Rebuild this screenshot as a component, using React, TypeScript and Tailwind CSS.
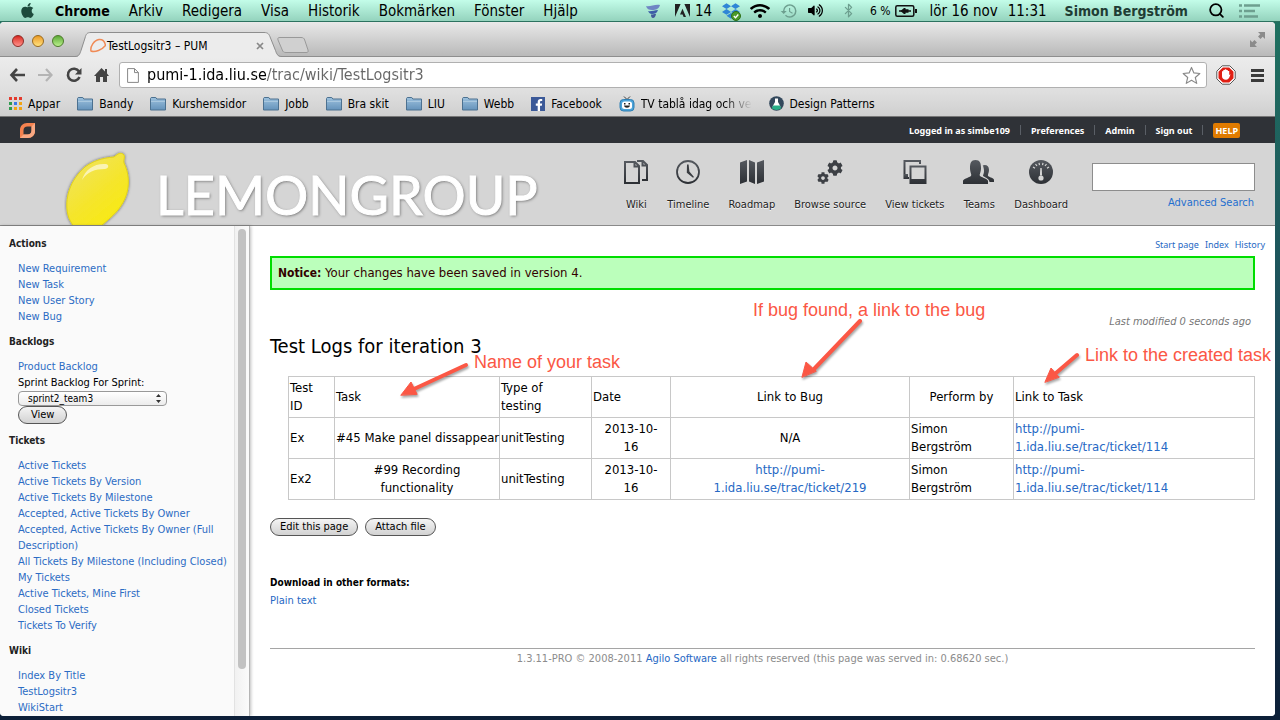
import type { ReactNode } from "react";
import { FaApple, FaDropbox, FaCog, FaWifi, FaVolumeUp, FaFacebookF } from "react-icons/fa";
import { MdHistory } from "react-icons/md";
import { Bluetooth, Search } from "lucide-react";

const ui = "font-['DejaVu_Sans_Condensed','DejaVu_Sans',sans-serif]";
const link = "text-[#2668c4] hover:underline";

function MenuBar() {
  return (
    <header className="flex h-[22px] shrink-0 items-center border-b border-[#2c7260] bg-linear-to-b from-[#c3fde9] to-[#94d3bd] text-[15px] leading-5 text-black">
      <nav aria-label="Application menu" className="flex items-center gap-[19px] pl-[19px] whitespace-nowrap">
        <FaApple className="size-[17px] text-[#1d4a3c]" />
        <span className="text-[14px] font-bold">Chrome</span>
        <span>Arkiv</span>
        <span>Redigera</span>
        <span>Visa</span>
        <span>Historik</span>
        <span>Bokmärken</span>
        <span>Fönster</span>
        <span>Hjälp</span>
      </nav>
      <div className="ml-auto flex items-center gap-[10px] pr-5 whitespace-nowrap">
        <svg className="size-4" viewBox="0 0 16 16" aria-hidden="true">
          <path d="M1 3c4 1 9-2 14-1-1 4-4 5-8 5C4 7 2 6 1 3z" fill="#6f86c4" />
          <path d="M3 8c3 1 6-1 10-1-1 3-3 4-6 4-2 0-3-1-4-3z" fill="#3d5da8" />
          <path d="M6 11.500c2 0 3-.5 5-.5-.5 2.500-1.500 4-3 4s-2-1.500-2-3.500z" fill="#42599a" />
        </svg>
        <span className="ml-1 flex items-center gap-[5px]">
          <svg className="h-[13px] w-[15px]" viewBox="0 0 15 13" aria-hidden="true">
            <path d="M0 0h5.600L0 13zM9.400 0H15v13zM7.500 4.800 11 13H8.600l-1-2.600H5z" fill="#222" />
          </svg>
          14
        </span>
        <span className="relative">
          <FaDropbox className="size-[18px] text-[#2f86d6]" />
          <svg className="absolute -right-px -bottom-px size-[10px]" viewBox="0 0 10 10" aria-hidden="true">
            <circle cx="5" cy="5" r="4.500" fill="#4c9a2a" stroke="#2e6f17" />
            <path d="m2.800 5 1.700 1.700 2.800-3.200" fill="none" stroke="#fff" strokeWidth="1.300" />
          </svg>
        </span>
        <FaWifi className="size-5" />
        <MdHistory className="size-[18px] text-[#6d9f8f]" />
        <FaVolumeUp className="size-[15px]" />
        <Bluetooth className="ml-2 size-[15px] text-[#6d9f8f]" strokeWidth={2} />
        <span className="ml-1 flex items-center gap-1 text-[12px]">
          6 %
          <svg className="h-3 w-[22px]" viewBox="0 0 22 12" aria-hidden="true">
            <rect x=".8" y=".8" width="18" height="10.400" rx="1.500" fill="none" stroke="#111" strokeWidth="1.500" />
            <path d="M20 4h2v4h-2z" fill="#111" />
            <path d="M4 6h3M12 6h4" stroke="#111" strokeWidth="1.600" />
            <path d="M5.500 6l3.500-3h1.500v1.200h3v3.600h-3V9H9z" fill="#111" />
          </svg>
        </span>
        <span className="ml-[3px]">lör 16 nov</span>
        <span>11:31</span>
        <span className="ml-2 text-[14px] font-bold text-[#1f3d34]">Simon Bergström</span>
        <Search className="ml-[10px] size-[17px]" strokeWidth={2.5} />
        <svg className="ml-1 h-[14px] w-[21px]" viewBox="0 0 21 14" aria-hidden="true">
          <path d="M0 1.500h3M5 1.500h16M0 7h3M5 7h11M0 12.500h3M5 12.500h14" stroke="#6d9f8f" strokeWidth="2.400" />
        </svg>
      </div>
    </header>
  );
}

function TabStrip() {
  return (
    <div className="flex h-[35px] shrink-0 items-end border-b border-[#8e8e8e] bg-linear-to-b from-[#e9e9e9] to-[#b9b9b9]">
      <div className="flex h-full items-center gap-2 pt-1 pl-3">
        <span className="size-3 rounded-full border border-[#8d2a25] bg-linear-to-b from-[#d8201c] to-[#ff8f8a]" />
        <span className="size-3 rounded-full border border-[#9a6a1d] bg-linear-to-b from-[#ea9a1e] to-[#ffe27c]" />
        <span className="size-3 rounded-full border border-[#4c7a2a] bg-linear-to-b from-[#5caa35] to-[#b9f08c]" />
      </div>
      <div className="relative -mb-px ml-[11px] flex h-[25px] w-[207px] items-center gap-px pt-[2px] pr-[18px] pl-[15px]">
        <svg className="absolute inset-0 size-full" viewBox="0 0 207 25" preserveAspectRatio="none" aria-hidden="true">
          <path d="M0 25c4 0 5-3 6-6l4-13c1-4 2-5.500 6-5.500h173c4 0 5 1.500 6.500 5.500l5 13c1 3 2 6 6.500 6z" fill="#ececec" />
          <path d="M0 24.500c4 0 5-3 6-6l4-12.500c1-4 2-5.500 6-5.500h173c4 0 5 1.500 6.500 5.500l5 12.500c1 3 2 6 6.500 6" fill="none" stroke="#8e8e8e" />
        </svg>
        <svg className="relative size-4" viewBox="0 0 16 16" aria-hidden="true">
          <path d="M1 13C0 9 4 2 9 1.500c4-.3 6 3 6.500 6C12 12 5 14.500 1 13z" fill="none" stroke="#f08a55" strokeWidth="1.500" />
        </svg>
        <span className="relative text-[12px] leading-4 whitespace-nowrap text-black">TestLogsitr3 – PUM</span>
        <button type="button" aria-label="Close tab" className="relative ml-auto">
          <svg className="size-[8px]" viewBox="0 0 8 8" aria-hidden="true">
            <path d="m1 1 6 6M7 1 1 7" stroke="#888" strokeWidth="1.700" />
          </svg>
        </button>
      </div>
      <button type="button" aria-label="New tab" className="-ml-[5px] pb-[3px]">
        <svg className="h-4 w-[32px]" viewBox="0 0 32 16" aria-hidden="true">
          <path d="M3 .5h21c2 0 3 .5 3.700 2.500l3.300 10c.5 2 0 2.500-2 2.500H9c-2 0-3-.5-3.700-2.500L1 3C.5 1 1 .5 3 .5z" fill="#d0d0d0" stroke="#999" />
        </svg>
      </button>
      <button type="button" aria-label="Full screen" className="mr-[10px] ml-auto self-center">
        <svg className="size-[15px]" viewBox="0 0 15 15" aria-hidden="true">
          <path d="M8 0h7v7l-2.300-2.300L10.500 7 8 4.500l2.300-2.200zM7 15H0V8l2.300 2.300L4.500 8 7 10.500l-2.300 2.200z" fill="#8b8b8b" />
        </svg>
      </button>
    </div>
  );
}

function AddressBar() {
  return (
    <div className="flex h-[36px] shrink-0 items-center bg-linear-to-b from-[#ececec] to-[#dedede] pr-[11px] pl-[9px]">
      <div className="flex items-center gap-[12px]">
        <button type="button" aria-label="Back">
          <svg className="h-4 w-[17px]" viewBox="0 0 17 16" aria-hidden="true">
            <path d="M8 2 2.500 8 8 14M3 8h13" fill="none" stroke="#444" strokeWidth="2.600" />
          </svg>
        </button>
        <button type="button" aria-label="Forward">
          <svg className="h-4 w-4" viewBox="0 0 16 16" aria-hidden="true">
            <path d="m8 2 5.500 6L8 14M13 8H0" fill="none" stroke="#b4b4b4" strokeWidth="2.200" />
          </svg>
        </button>
        <button type="button" aria-label="Reload">
          <svg className="size-4" viewBox="0 0 16 16" aria-hidden="true">
            <path d="M13 4.500A6 6 0 1 0 13.500 10" fill="none" stroke="#444" strokeWidth="2.600" />
            <path d="M15.500 1v6.500H9z" fill="#444" />
          </svg>
        </button>
        <button type="button" aria-label="Home">
          <svg className="h-4 w-[15px]" viewBox="0 0 15 16" aria-hidden="true">
            <path d="M7.500 1 11 4.500V2h2v4.500L15 9h-2v6H9v-5H6v5H2V9H0z" fill="#444" />
          </svg>
        </button>
      </div>
      <div className="ml-[10px] flex h-[26px] flex-1 items-center gap-2 rounded-[3px] border border-[#b0b0b0] bg-white px-[7px]">
        <svg className="h-[15px] w-3 shrink-0" viewBox="0 0 12 15" aria-hidden="true">
          <path d="M.6.6h6.900L11.400 4.500v9.900H.6zM7.500.6v4h4" fill="#fff" stroke="#888" />
        </svg>
        <input
          type="text"
          aria-label="Address"
          defaultValue="pumi-1.ida.liu.se/trac/wiki/TestLogsitr3"
          className="h-6 min-w-0 flex-1 bg-[linear-gradient(to_right,#000_119px,#666_119px)] bg-clip-text text-[16px] leading-6 text-transparent caret-black outline-none"
        />
        <svg className="-mr-[2px] size-[19px] shrink-0" viewBox="0 0 20 20" aria-hidden="true">
          <path d="m10 1.500 2.500 5.800 6.300.6-4.800 4.200 1.500 6.200-5.500-3.300-5.500 3.300L6 12.100 1.200 7.900l6.300-.6z" fill="#fff" stroke="#888" strokeWidth="1.200" strokeLinejoin="round" />
        </svg>
      </div>
      <button type="button" aria-label="Content blocker" className="ml-[9px]">
        <svg className="size-5" viewBox="0 0 20 20" aria-hidden="true">
          <path d="M6.200.8h7.600l5.400 5.400v7.600l-5.400 5.400H6.200L.8 13.800V6.200z" fill="#fff" stroke="#555" />
          <path d="M6.800 2.500h6.400l4.300 4.300v6.400l-4.300 4.300H6.800l-4.300-4.300V6.800z" fill="#e01f14" />
          <path d="M6 8V6.300h1.300V5h1.500v-.7h1.500V5h1.500v1h1.400v4l1.300-.8-.8 2.400c-.7 2-1.700 3.100-3.700 3.100C7.600 14.700 6 13.500 6 11.300z" fill="#fff" />
        </svg>
      </button>
      <button type="button" aria-label="Menu" className="ml-[15px]">
        <svg className="h-[13px] w-[13px]" viewBox="0 0 13 13" aria-hidden="true">
          <path d="M0 1.500h13M0 6.500h13M0 11.500h13" stroke="#3a3a3a" strokeWidth="2.800" />
        </svg>
      </button>
    </div>
  );
}

function Folder() {
  return (
    <svg className="h-[14px] w-4" viewBox="0 0 16 14" aria-hidden="true">
      <defs>
        <linearGradient id="folder" x1="0" y1="0" x2="0" y2="1">
          <stop offset="0" stopColor="#9dc1dd" />
          <stop offset="1" stopColor="#6593bb" />
        </linearGradient>
      </defs>
      <path d="M.5 13V1.500l.7-1h4.600l1 1.500h8.700V13z" fill="url(#folder)" stroke="#4c7190" />
      <path d="M1 4.500h14" stroke="#a9c8df" />
    </svg>
  );
}

function Bookmark({ icon, children }: { icon: ReactNode; children: ReactNode }) {
  return (
    <a href="#bookmark" className="flex items-center gap-[6px] whitespace-nowrap text-black">
      {icon}
      {children}
    </a>
  );
}

const appColors = ["#e33b2e", "#e33b2e", "#e33b2e", "#2f9a4f", "#3b78e7", "#f2a413", "#2f9a4f", "#f2a413", "#f2a413"];

function BookmarksBar() {
  return (
    <nav aria-label="Bookmarks" className="flex h-[24px] shrink-0 items-center gap-[17px] border-b border-[#777] bg-linear-to-b from-[#dedede] to-[#cfcfcf] pb-[2px] pl-[9px] text-[12px] leading-4">
      <Bookmark
        icon={
          <span className="grid grid-cols-3 gap-[2px]">
            {appColors.map((c, i) => (
              <span key={i} className="size-[3px]" style={{ backgroundColor: c }} />
            ))}
          </span>
        }
      >
        Appar
      </Bookmark>
      {["Bandy", "Kurshemsidor", "Jobb", "Bra skit", "LIU", "Webb"].map((name) => (
        <Bookmark key={name} icon={<Folder />}>
          {name}
        </Bookmark>
      ))}
      <Bookmark
        icon={
          <span className="flex size-[14px] items-end justify-end bg-[#3b5998] text-white">
            <FaFacebookF className="size-3" />
          </span>
        }
      >
        Facebook
      </Bookmark>
      <Bookmark
        icon={
          <svg className="size-4" viewBox="0 0 16 16" aria-hidden="true">
            <path d="m5 .5 3 3 3-3" fill="none" stroke="#3a3a3a" />
            <rect x="1" y="3.500" width="14" height="11.500" rx="3.500" fill="#4ba3d9" stroke="#2f7fb3" />
            <rect x="3" y="5.500" width="10" height="7.500" rx="2.500" fill="#fff" />
            <path d="M5 7h1.500v1.500H5zM9.500 7H11v1.500H9.500zM5 9.500h6c-.5 3-5.500 3-6 0z" fill="#222" />
          </svg>
        }
      >
        <span className="mask-r-from-75%">TV tablå idag och ve</span>
      </Bookmark>
      <Bookmark
        icon={
          <svg className="size-[15px]" viewBox="0 0 15 15" aria-hidden="true">
            <circle cx="7.500" cy="7.500" r="7.300" fill="#33485c" />
            <path d="M6 2.500h3V6l2.500 4.500c-1 1.500-7 1.500-8 0L6 6z" fill="#fff" />
            <path d="M4 9.500h7l1.200 2.800c-2.700 2.300-6.700 2.300-9.400 0z" fill="#27ae87" />
          </svg>
        }
      >
        Design Patterns
      </Bookmark>
    </nav>
  );
}

function AccountBar() {
  const sep = <span className="h-[10px] w-px bg-[#5a5f66]" />;
  return (
    <div className="flex h-[26px] shrink-0 items-center bg-[#2f3237] pr-[35px] pl-[19px]">
      <svg className="size-[17px]" viewBox="0 0 17 17" aria-hidden="true">
        <path d="M1 16V8c0-4 3-7 7-7h8v8c0 4-3 7-7 7zM4.500 12.500h4c2.500 0 4-1.500 4-4v-4h-4c-2.500 0-4 1.500-4 4z" fill="#f5824f" fillRule="evenodd" />
        <path d="M16 1v8c0 4-3 7-7 7H1l3.500-3.500h4c2.500 0 4-1.500 4-4v-4z" fill="#f9a983" />
      </svg>
      <div className="ml-auto flex items-center gap-[10px] font-['Noto_Sans',sans-serif] text-[9px] leading-[15px] font-bold text-white">
        <span>Logged in as simbe109</span>
        {sep}
        <a href="#preferences">Preferences</a>
        {sep}
        <a href="#admin">Admin</a>
        {sep}
        <a href="#sign-out">Sign out</a>
        {sep}
        <a href="#help" className="rounded-[2px] bg-[#e07b00] px-[2px]">HELP</a>
      </div>
    </div>
  );
}

function Lemon() {
  return (
    <svg className="h-[76px] w-[70px] self-end" viewBox="0 0 70 76" aria-hidden="true">
      <defs>
        <linearGradient id="lemon" x1="0" y1="0" x2=".7" y2="1">
          <stop offset="0" stopColor="#efe36c" />
          <stop offset=".6" stopColor="#f5e52d" />
          <stop offset="1" stopColor="#f8ea12" />
        </linearGradient>
        <filter id="lemonShadow" x="-10%" y="-10%" width="120%" height="120%">
          <feDropShadow dx="0" dy="0" stdDeviation="1.500" floodOpacity=".55" />
        </filter>
      </defs>
      <path
        d="M50 8c3-2 5-5 9-3 3 2 0 6 1 9 9 19 4 40-14 55-3 3-6 5-9 8H9c-1-3-4-6-5-11C0 50 6 31 21 18c8-6 17-9 29-10z"
        fill="url(#lemon)"
        stroke="#e3d417"
        filter="url(#lemonShadow)"
      />
      <path d="M18 31c3-11 13-17 24-16 4 1 2 5-1 5-10 0-18 3-23 11z" fill="#faf3b4" />
    </svg>
  );
}

const ink = "url(#ink)";
const navItems: { label: string; icon: ReactNode }[] = [
  {
    label: "Wiki",
    icon: (
      <svg className="h-6 w-6" viewBox="0 0 24 24">
        <path d="M1 2h10l4 4v17H1zM10.500 2v4.500H15" fill="none" stroke={ink} strokeWidth="2" />
        <path d="M13 1h6l4 4v15h-5M18.500 1v4.500H23" fill="none" stroke={ink} strokeWidth="2" />
      </svg>
    ),
  },
  {
    label: "Timeline",
    icon: (
      <svg className="h-6 w-6" viewBox="0 0 24 24">
        <circle cx="12" cy="12" r="11" fill="none" stroke={ink} strokeWidth="1.800" />
        <path d="M11 4.500h1.600l.8 7 4.600 5.500-1 .8-6.200-5z" fill="#3a3d42" />
      </svg>
    ),
  },
  {
    label: "Roadmap",
    icon: (
      <svg className="h-6 w-6" viewBox="0 0 24 24">
        <path d="M0 2.500 7 0v21.500L0 24zM9 0l6 2.500V24l-6-2.500zM17 2.500 24 0v21.500L17 24z" fill={ink} />
      </svg>
    ),
  },
  {
    label: "Browse source",
    icon: (
      <span className="flex h-6 w-[26px] items-end text-[#3d4045]">
        <FaCog className="size-3" />
        <FaCog className="-ml-[2px] size-4 self-start" />
      </span>
    ),
  },
  {
    label: "View tickets",
    icon: (
      <svg className="h-6 w-6" viewBox="0 0 24 24">
        <path d="M6 18H1.500V1H17v3" fill="none" stroke={ink} strokeWidth="2" />
        <path d="M1 14h4v5H1z" fill={ink} />
        <path d="M6.500 5.500h17V24h-17zM8.500 7.500V19h13V7.500z" fill={ink} fillRule="evenodd" />
      </svg>
    ),
  },
  {
    label: "Teams",
    icon: (
      <svg className="h-6 w-8" viewBox="0 0 32 24">
        <path d="M0 24v-3c0-2 5-3 8-5 1-2-1-3-1-8 0-5 1-8 5.500-8S18 3 18 8s-2 6-1 8c3 2 8 3 8 5v3z" fill={ink} />
        <path d="M19 5.500c4-1.500 7 0 7 4.500 0 3-1.500 4-1 6 2 1.500 6 2 6 4v2h-4.500c0-3-4-4.500-6.500-6 0-1.500 1-2.500 1-5 0-2-.5-3.500-1-5.500z" fill={ink} />
      </svg>
    ),
  },
  {
    label: "Dashboard",
    icon: (
      <svg className="h-6 w-6" viewBox="0 0 24 24">
        <circle cx="12" cy="12" r="12" fill={ink} />
        <path d="m4 7 2 1.300M6.500 4 8 6M10 2.800l.5 2.400M14 2.800l-.5 2.400M17.500 4 16 6M20 7l-2 1.300" stroke="#d5d5d5" strokeWidth="1.200" />
        <path d="M11.300 8h1.400l.4 7.500h-2.200z" fill="#d5d5d5" />
        <circle cx="12" cy="18" r="2.600" fill="#d5d5d5" />
      </svg>
    ),
  },
];

function SiteHeader() {
  return (
    <header className="flex h-[83px] shrink-0 overflow-hidden border-b border-[#8a8a8a] bg-[#d5d5d5] pr-5 pl-[64px]">
      <svg className="absolute size-0" aria-hidden="true">
        <defs>
          <linearGradient id="ink" x1="0" y1="0" x2="0" y2="1">
            <stop offset="0" stopColor="#55595f" />
            <stop offset="1" stopColor="#2d3035" />
          </linearGradient>
        </defs>
      </svg>
      <Lemon />
      <span className="ml-[22px] self-end font-['Lato',sans-serif] text-[54px] leading-[60px] text-white [-webkit-text-stroke:1px_white] text-shadow-[1px_1px_3px_rgb(0_0_0/0.5)]">
        LEMONGROUP
      </span>
      <nav aria-label="Site" className="ml-auto flex gap-[19px] pt-[17px]">
        {navItems.map((item) => (
          <a key={item.label} href="#nav" className="flex flex-col items-center gap-[13px] text-[11px] leading-4 whitespace-nowrap text-[#222] text-shadow-[0_1px_0_rgb(255_255_255/0.8)]">
            {item.icon}
            {item.label}
          </a>
        ))}
      </nav>
      <form className="ml-[24px] flex w-[163px] flex-col items-end pt-5">
        <input type="search" aria-label="Search" className="h-7 w-full appearance-none border border-[#8d8d8d] bg-white px-1 text-[12px] outline-none" />
        <a href="#advanced" className="mt-1 pr-px text-[11px] leading-4 text-[#1f6fcf]">Advanced Search</a>
      </form>
    </header>
  );
}

const pill = "rounded-full border border-[#555] bg-linear-to-b from-[#f4f4f4] to-[#d2d2d2] text-[11px] text-black";

function SideSection({ title, children }: { title: string; children: ReactNode }) {
  return (
    <section className="pt-[9px]">
      <h2 className="pl-[9px] text-[10px] font-bold text-[#222]">{title}</h2>
      <div className="pt-[9px] pl-[18px]">{children}</div>
    </section>
  );
}

function SideLinks({ items }: { items: string[] }) {
  return (
    <ul>
      {items.map((t) => (
        <li key={t}>
          <a href="#item" className="text-[#2c6cc4] hover:underline">{t}</a>
        </li>
      ))}
    </ul>
  );
}

function Sidebar() {
  return (
    <aside className="relative z-10 flex w-[250px] shrink-0 overflow-hidden border-r border-[#b5b5b5] bg-[#fafafa] shadow-[1px_0_3px_rgb(0_0_0/0.25)]">
      <div className="flex-1 pt-px text-[11px] leading-4">
        <SideSection title="Actions">
          <SideLinks items={["New Requirement", "New Task", "New User Story", "New Bug"]} />
        </SideSection>
        <SideSection title="Backlogs">
          <SideLinks items={["Product Backlog"]} />
          <form className="flex flex-col items-start">
            <label htmlFor="sprint" className="text-black">Sprint Backlog For Sprint:</label>
            <span className="relative flex">
              <select id="sprint" className="h-[15px] w-[149px] appearance-none rounded-[4px] border border-[#999] bg-linear-to-b from-white to-[#ececec] pl-[9px] text-[10px] leading-3 text-black">
                <option>sprint2_team3</option>
              </select>
              <svg className="pointer-events-none absolute top-[3px] right-[6px] h-[9px] w-[5px]" viewBox="0 0 5 9" aria-hidden="true">
                <path d="M2.500 0 5 3H0zM2.500 9 0 6h5z" fill="#333" />
              </svg>
            </span>
            <button type="button" className={`h-[18px] px-3 leading-4 ${pill}`}>View</button>
          </form>
        </SideSection>
        <SideSection title="Tickets">
          <SideLinks
            items={[
              "Active Tickets",
              "Active Tickets By Version",
              "Active Tickets By Milestone",
              "Accepted, Active Tickets By Owner",
              "Accepted, Active Tickets By Owner (Full Description)",
              "All Tickets By Milestone (Including Closed)",
              "My Tickets",
              "Active Tickets, Mine First",
              "Closed Tickets",
              "Tickets To Verify",
            ]}
          />
        </SideSection>
        <SideSection title="Wiki">
          <SideLinks items={["Index By Title", "TestLogsitr3", "WikiStart"]} />
        </SideSection>
      </div>
      <div className="w-[15px] shrink-0 border-l border-[#e2e2e2] bg-linear-to-r from-[#f1f1f1] to-[#fbfbfb] pt-[3px] pb-[47px] pl-[3px]">
        <div className="h-full w-2 rounded-full bg-[#c2c2c2]" />
      </div>
    </aside>
  );
}

function TicketLink({ id }: { id: number }) {
  return (
    <a href="#ticket" className={link}>
      http://pumi-<br />1.ida.liu.se/trac/ticket/{id}
    </a>
  );
}

const cell = "border border-[#c8c8c8] px-px py-[2px] align-middle font-normal";

function LogTable() {
  return (
    <div className="pt-[18px] pl-[18px]">
      <table className="w-full table-fixed border-collapse text-left text-[13px] leading-[18px] text-black">
        <colgroup>
          <col className="w-[46px]" />
          <col className="w-[165px]" />
          <col className="w-[92px]" />
          <col className="w-[79px]" />
          <col className="w-[239px]" />
          <col className="w-[104px]" />
          <col />
        </colgroup>
        <thead>
          <tr>
            <th className={cell}>Test<br />ID</th>
            <th className={cell}>Task</th>
            <th className={cell}>Type of<br />testing</th>
            <th className={cell}>Date</th>
            <th className={`${cell} text-center`}>Link to Bug</th>
            <th className={`${cell} text-center`}>Perform by</th>
            <th className={cell}>Link to Task</th>
          </tr>
        </thead>
        <tbody>
          <tr>
            <td className={cell}>Ex</td>
            <td className={`${cell} text-center whitespace-nowrap`}>#45 Make panel dissappear</td>
            <td className={cell}>unitTesting</td>
            <td className={`${cell} text-center`}>2013-10-<br />16</td>
            <td className={`${cell} text-center`}>N/A</td>
            <td className={cell}>Simon<br />Bergström</td>
            <td className={cell}><TicketLink id={114} /></td>
          </tr>
          <tr>
            <td className={cell}>Ex2</td>
            <td className={`${cell} text-center`}>#99 Recording<br />functionality</td>
            <td className={cell}>unitTesting</td>
            <td className={`${cell} text-center`}>2013-10-<br />16</td>
            <td className={`${cell} text-center`}><TicketLink id={219} /></td>
            <td className={cell}>Simon<br />Bergström</td>
            <td className={cell}><TicketLink id={114} /></td>
          </tr>
        </tbody>
      </table>
    </div>
  );
}

function Annotations() {
  const note = "absolute whitespace-nowrap font-['Liberation_Sans',Arial,sans-serif] text-[18px] leading-5 text-[#fb5745]";
  return (
    <div className="pointer-events-none absolute inset-0">
      <svg className="absolute top-0 left-0 h-[300px] w-full drop-shadow-[1px_2px_1px_rgb(0_0_0/0.35)]" aria-hidden="true">
        <g stroke="#fb5745" strokeWidth="4" strokeLinecap="round" fill="#fb5745">
          <path d="M216 139 164 163" />
          <path d="M151 169l10-13 6 12z" strokeWidth="1" />
          <path d="M610 95 565 142" />
          <path d="M552 151l4-15 10 9z" strokeWidth="1" />
          <path d="M827 129 806 147" />
          <path d="M795 156l6-14 8 9z" strokeWidth="1" />
        </g>
      </svg>
      <p className={`${note} top-[74px] left-[503px]`}>If bug found, a link to the bug</p>
      <p className={`${note} top-[126px] left-[224px]`}>Name of your task</p>
      <p className={`${note} top-[119px] left-[835px]`}>Link to the created task</p>
    </div>
  );
}

function WikiPage() {
  return (
    <main className="relative flex-1 overflow-hidden bg-white px-5 pt-[11px]">
      <nav aria-label="Wiki" className="-mr-[10px] flex justify-end gap-[6px] font-['Noto_Sans',sans-serif] text-[9px] leading-4">
        <a href="#start" className={link}>Start page</a>
        <a href="#index" className={link}>Index</a>
        <a href="#history" className={link}>History</a>
      </nav>
      <p className="mt-[3px] border-2 border-[#00dd00] bg-[#bbffbb] px-[6px] py-[6px] text-[13px] leading-[18px] text-[#330000]">
        <strong className="text-[12px]">Notice:</strong> Your changes have been saved in version 4.
      </p>
      <p className="mt-6 pr-1 text-right text-[11px] leading-4 text-[#777] italic">Last modified 0 seconds ago</p>
      <h1 className="mt-1 text-[20px] leading-6 text-black">Test Logs for iteration 3</h1>
      <LogTable />
      <div className="mt-[18px] flex gap-[7px]">
        <button type="button" className={`h-[18px] px-[9px] leading-4 ${pill}`}>Edit this page</button>
        <button type="button" className={`h-[18px] px-[9px] leading-4 ${pill}`}>Attach file</button>
      </div>
      <section className="mt-[38px] text-[11px] leading-[18px]">
        <h2 className="text-[10px] font-bold text-black">Download in other formats:</h2>
        <a href="#plain" className={link}>Plain text</a>
      </section>
      <footer className="mt-[38px] border-t border-[#a5a5a5] text-center text-[11px] leading-5 text-[#8c8c8c]">
        1.3.11-PRO © 2008-2011 <a href="#agilo" className={link}>Agilo Software</a> all rights reserved (this page was served in: 0.68620 sec.)
      </footer>
      <Annotations />
    </main>
  );
}

export default function App() {
  return (
    <div className={`flex h-screen flex-col overflow-hidden bg-linear-to-b from-[#1f7360] via-[#1d4a5a] to-[#0d1f38] ${ui}`}>
      <MenuBar />
      <div className="mr-[5px] mb-1 flex min-h-0 flex-1 flex-col overflow-hidden rounded-[4px] bg-white">
        <TabStrip />
        <AddressBar />
        <BookmarksBar />
        <AccountBar />
        <SiteHeader />
        <div className="flex min-h-0 flex-1">
          <Sidebar />
          <WikiPage />
        </div>
      </div>
    </div>
  );
}
